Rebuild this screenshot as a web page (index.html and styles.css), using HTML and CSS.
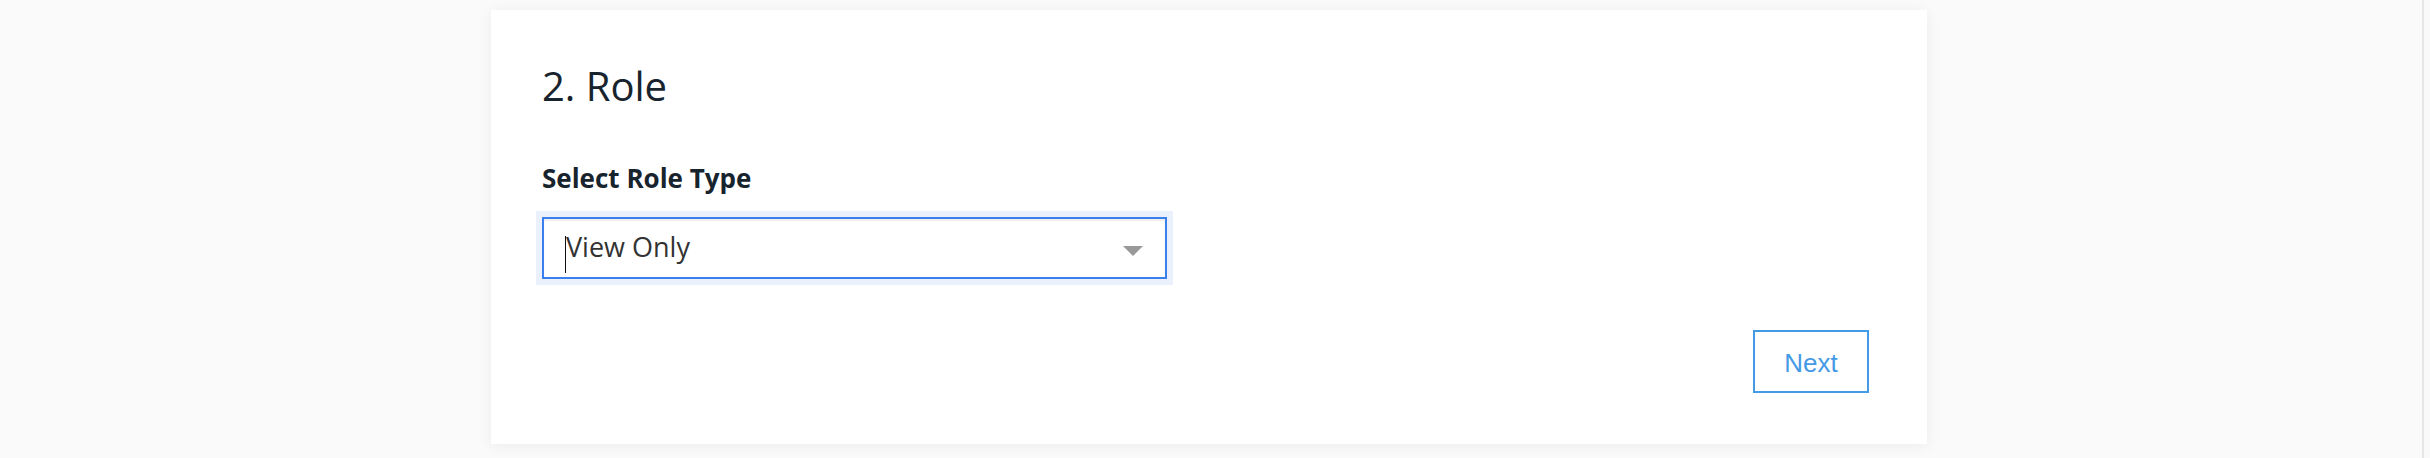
FILE: index.html
```html
<!DOCTYPE html>
<html>
<head>
<meta charset="utf-8">
<link rel="stylesheet" href="styles.css">
</head>
<body>
<div class="page">
  <main class="main">
    <section class="card">
      <h2 class="title">2. Role</h2>
      <label class="label">Select Role Type</label>
      <div class="select-wrap">
        <div class="select">
          <span class="caret"></span><span class="value">View Only</span>
          <span class="arrow"></span>
        </div>
      </div>
      <div class="actions">
        <button class="btn">Next</button>
      </div>
    </section>
  </main>
  <div class="rail"></div>
</div>
</body>
</html>
```

FILE: styles.css
```css
html, body {
  margin: 0;
  padding: 0;
  background: #fafafa;
}
.page {
  display: flex;
  width: 2430px;
  height: 458px;
  font-family: "Open Sans", "Liberation Sans", sans-serif;
}
.main {
  width: 2418px;
  flex: none;
  display: flex;
  justify-content: center;
  align-items: flex-start;
  padding-top: 10px;
}
.rail {
  width: 8px;
  flex: none;
  margin-left: 4px;
  border-left: 2px solid #e6e6e6;
  background: #f9f9f9;
  box-sizing: border-box;
}
.card {
  width: 1436px;
  box-sizing: border-box;
  background: #fff;
  padding: 52px 58px 51px 51px;
  box-shadow: 0 2px 14px rgba(0, 0, 0, 0.06);
  display: flex;
  flex-direction: column;
}
.title {
  margin: 0;
  font-size: 40px;
  font-weight: 400;
  line-height: 48px;
  color: #17232d;
}
.label {
  display: block;
  margin-top: 50px;
  font-size: 26px;
  font-weight: 700;
  line-height: 36px;
  color: #17232d;
}
.select-wrap {
  margin-top: 21px;
  width: 625px;
  box-shadow: 0 0 0 6px #eaf1fd;
}
.select {
  height: 62px;
  box-sizing: border-box;
  border: 2px solid #3a7ef0;
  background: #fff;
  box-shadow: inset 0 2px 2px rgba(0, 0, 0, 0.07);
  display: flex;
  align-items: center;
  padding-left: 21px;
  padding-right: 22px;
}
.caret {
  width: 1px;
  height: 37px;
  background: #111;
  margin-top: 12px;
  flex: none;
}
.value {
  font-size: 27px;
  color: #333;
  line-height: 36px;
  margin-top: -2px;
}
.arrow {
  margin-left: auto;
  width: 0;
  height: 0;
  border-left: 10px solid transparent;
  border-right: 10px solid transparent;
  border-top: 10px solid #999;
  margin-top: 6px;
}
.actions {
  display: flex;
  justify-content: flex-end;
  margin-top: 51px;
}
.btn {
  width: 116px;
  height: 63px;
  box-sizing: border-box;
  border: 2px solid #459ae6;
  background: #fff;
  color: #459ae6;
  font-family: "Liberation Sans", Arial, sans-serif;
  font-size: 26px;
  padding: 3px 0 0 0;
  cursor: pointer;
}
```
